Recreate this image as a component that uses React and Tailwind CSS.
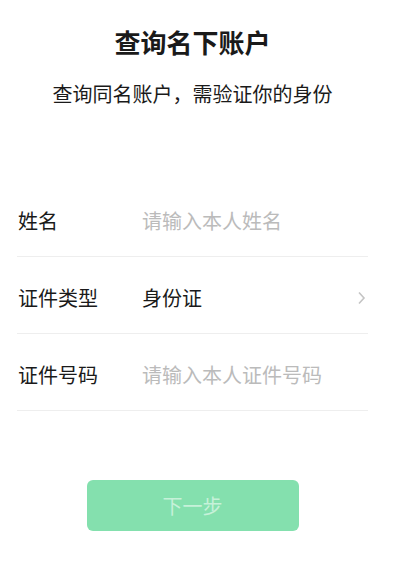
import React from 'react';

const rows = [
  { label: '姓名', placeholder: '请输入本人姓名' },
  { label: '证件类型', value: '身份证', arrow: true },
  { label: '证件号码', placeholder: '请输入本人证件号码' },
];

export default function App() {
  return (
    <div
      className="min-h-screen bg-white text-[#1a1a1a]"
      style={{ fontFamily: '"Noto Sans CJK SC", "Noto Sans", sans-serif' }}
    >
      <div className="w-[385px]">
        <h1 className="pt-[28px] text-center text-[26px] leading-[28px] font-bold">查询名下账户</h1>
        <p className="mt-[24px] text-center text-[20px] leading-[28px]">查询同名账户，需验证你的身份</p>

        <div className="mt-[72px] px-[17px]">
          {rows.map((row) => (
            <div key={row.label} className="flex h-[77px] items-center border-b border-[#eeeeee] pt-[6px]">
              <div className="w-[125px] pl-[1px] text-[20px]">{row.label}</div>
              {row.placeholder ? (
                <div className="flex-1 text-[20px] text-[#bbbbbb]">{row.placeholder}</div>
              ) : (
                <div className="flex-1 text-[20px]">{row.value}</div>
              )}
              {row.arrow && (
                <svg width="9" height="14" viewBox="0 0 9 14" className="mr-[2px]">
                  <path d="M2 1.5 L7 7 L2 12.5" fill="none" stroke="#c4c4c4" strokeWidth="1.6" />
                </svg>
              )}
            </div>
          ))}
        </div>

        <div className="mt-[69px] flex justify-center">
          <button className="h-[51px] w-[212px] rounded-[6px] bg-[#84e0ae] text-[20px] text-[#c6f1d9]">
            下一步
          </button>
        </div>
      </div>
    </div>
  );
}
